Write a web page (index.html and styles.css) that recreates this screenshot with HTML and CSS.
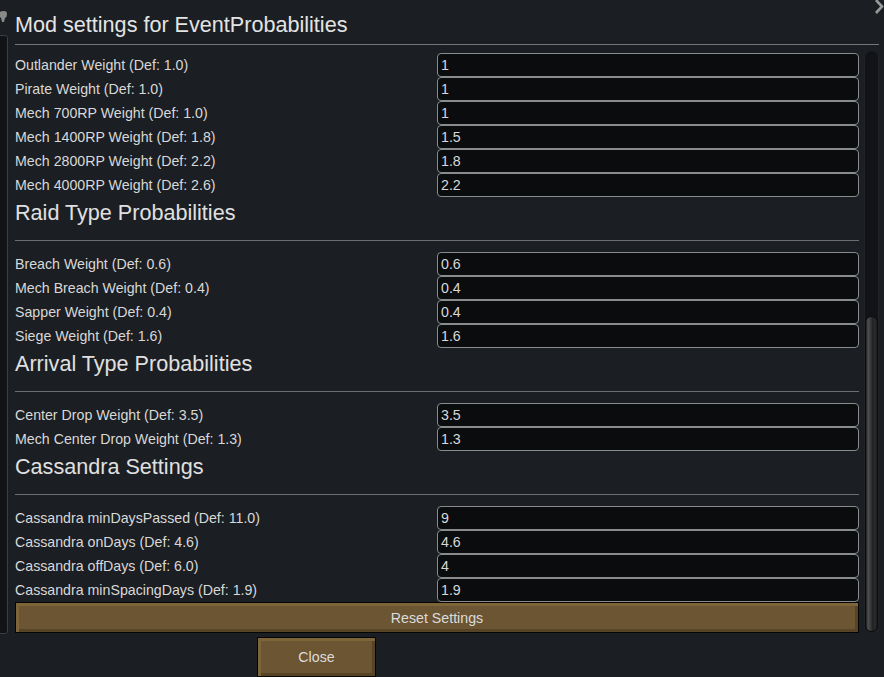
FILE: index.html
```html
<!DOCTYPE html>
<html lang="en">
<head>
    <meta charset="UTF-8">
    <title>Mod settings for EventProbabilities</title>
    <link rel="stylesheet" href="styles.css">
</head>
<body>
    <div class="screen">
        <!-- window behind the dialog, only its edge shows -->
        <div class="back-panel"></div>
        <svg class="pin" width="8" height="12" viewBox="0 0 8 12">
            <path d="M0 1 Q1 0 4 0 Q7 0 7 3 Q7 6 5 7 L4 11 L2 11 L1 7 L0 6 Z" fill="#8a8a8a"/>
        </svg>
        <svg class="close-x" width="16" height="16" viewBox="0 0 16 16">
            <path d="M2 0 L8 6.5 L2 13" stroke="#9a9a9a" stroke-width="2.6" fill="none"/>
        </svg>

        <div class="dialog">
            <h1 class="title">Mod settings for EventProbabilities</h1>

            <div class="body">
                <div class="list">
                    <div class="row"><span class="label">Outlander Weight (Def: 1.0)</span><input class="field" value="1"></div>
                    <div class="row"><span class="label">Pirate Weight (Def: 1.0)</span><input class="field" value="1"></div>
                    <div class="row"><span class="label">Mech 700RP Weight (Def: 1.0)</span><input class="field" value="1"></div>
                    <div class="row"><span class="label">Mech 1400RP Weight (Def: 1.8)</span><input class="field" value="1.5"></div>
                    <div class="row"><span class="label">Mech 2800RP Weight (Def: 2.2)</span><input class="field" value="1.8"></div>
                    <div class="row"><span class="label">Mech 4000RP Weight (Def: 2.6)</span><input class="field" value="2.2"></div>

                    <h2 class="section">Raid Type Probabilities</h2>
                    <div class="row"><span class="label">Breach Weight (Def: 0.6)</span><input class="field" value="0.6"></div>
                    <div class="row"><span class="label">Mech Breach Weight (Def: 0.4)</span><input class="field" value="0.4"></div>
                    <div class="row"><span class="label">Sapper Weight (Def: 0.4)</span><input class="field" value="0.4"></div>
                    <div class="row"><span class="label">Siege Weight (Def: 1.6)</span><input class="field" value="1.6"></div>

                    <h2 class="section">Arrival Type Probabilities</h2>
                    <div class="row"><span class="label">Center Drop Weight (Def: 3.5)</span><input class="field" value="3.5"></div>
                    <div class="row"><span class="label">Mech Center Drop Weight (Def: 1.3)</span><input class="field" value="1.3"></div>

                    <h2 class="section">Cassandra Settings</h2>
                    <div class="row"><span class="label">Cassandra minDaysPassed (Def: 11.0)</span><input class="field" value="9"></div>
                    <div class="row"><span class="label">Cassandra onDays (Def: 4.6)</span><input class="field" value="4.6"></div>
                    <div class="row"><span class="label">Cassandra offDays (Def: 6.0)</span><input class="field" value="4"></div>
                    <div class="row"><span class="label">Cassandra minSpacingDays (Def: 1.9)</span><input class="field" value="1.9"></div>

                    <button class="btn btn-reset">Reset Settings</button>
                </div>

                <div class="scrollbar"><div class="thumb"></div></div>
            </div>

            <div class="footer">
                <button class="btn btn-close">Close</button>
            </div>
        </div>
    </div>
</body>
</html>
```

FILE: styles.css
```css
body {
    margin: 0;
    background-color: #1b1e22;
    font-family: "Liberation Sans", Arial, sans-serif;
    color: #d8d8d8;
}

.screen {
    position: relative;
    width: 884px;
    height: 677px;
    overflow: hidden;
}

.back-panel {
    position: absolute;
    left: -6px;
    top: 35px;
    width: 12px;
    height: 597px;
    background-color: #111316;
    border: 1px solid #3b3d41;
    border-radius: 3px;
}

.pin {
    position: absolute;
    left: 0;
    top: 11px;
}

.close-x {
    position: absolute;
    left: 874px;
    top: 0;
}

.dialog {
    padding-left: 15px;
}

.title {
    margin: 0;
    padding: 10px 0 4px;
    margin-right: 5px;
    font-size: 21.6px;
    line-height: 30px;
    font-weight: normal;
    color: #e4e4e4;
    border-bottom: 1px solid #74767a;
}

.body {
    display: flex;
    gap: 5px;
}

.list {
    width: 844px;
    padding-top: 8px;
}

.row {
    display: grid;
    grid-template-columns: 422px 422px;
    height: 24px;
}

.label {
    font-size: 14.2px;
    line-height: 24px;
}

.field {
    box-sizing: border-box;
    height: 24px;
    margin: 0;
    padding: 0 3px;
    background-color: #0b0c0e;
    border: 1px solid #8a8b8d;
    border-radius: 4px;
    color: #d8d8d8;
    font-family: inherit;
    font-size: 14.2px;
    outline: none;
}

.section {
    margin: 0 0 11px;
    padding: 2px 0 13px;
    font-size: 21.6px;
    line-height: 28px;
    font-weight: normal;
    color: #e0e0e0;
    border-bottom: 1px solid #6c6e72;
}

.btn {
    display: block;
    box-sizing: border-box;
    background-color: #6b5532;
    border: 1px solid #050505;
    box-shadow: inset 3px 3px 0 #7e6539, inset -3px -3px 0 #574427;
    color: #dcdcdc;
    font-family: inherit;
    font-size: 14.2px;
    cursor: pointer;
}

.btn-reset {
    width: 100%;
    height: 31px;
}

.scrollbar {
    box-sizing: border-box;
    width: 15px;
    height: 583px;
    margin-top: 5px;
    background-color: #111316;
    border: 1px solid #1f2226;
    border-radius: 8px;
    display: flex;
    flex-direction: column;
    justify-content: flex-end;
}

.thumb {
    height: 314px;
    border-radius: 7px;
    background: linear-gradient(to right, #1c1c1c 0%, #4e4f51 18%, #3a3b3d 40%, #1f2022 62%, #2c2d2f 82%, #1a1a1a 100%);
    border: 1px solid #0c0c0c;
}

.footer {
    padding: 4px 0 0 242px;
}

.btn-close {
    width: 119px;
    height: 40px;
}
```
